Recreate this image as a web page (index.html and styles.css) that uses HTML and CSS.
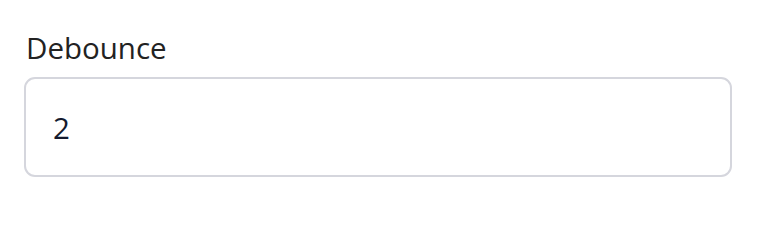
FILE: index.html
```html
<!DOCTYPE html>
<html>
<head>
<meta charset="utf-8">
<link rel="stylesheet" href="styles.css">
</head>
<body>
<div class="field">
  <label class="field-label" for="debounce">Debounce</label>
  <input class="field-input" id="debounce" type="text" value="2">
</div>
</body>
</html>
```
FILE: styles.css
```css
html, body {
  margin: 0;
  padding: 0;
  background: #ffffff;
}
body {
  font-family: "Open Sans", "Liberation Sans", sans-serif;
}
.field {
  display: flex;
  flex-direction: column;
  gap: 11px;
  padding: 30px 32px 0 24px;
}
.field-label {
  font-size: 29.5px;
  line-height: 36px;
  color: #222222;
  padding-left: 2px;
}
.field-input {
  box-sizing: border-box;
  width: 708px;
  height: 100px;
  border: 2px solid #d5d6dd;
  border-radius: 11px;
  padding: 0 27px;
  font-family: "Open Sans", "Liberation Sans", sans-serif;
  font-size: 29.5px;
  color: #141a2e;
  background: #ffffff;
  outline: none;
}
```
